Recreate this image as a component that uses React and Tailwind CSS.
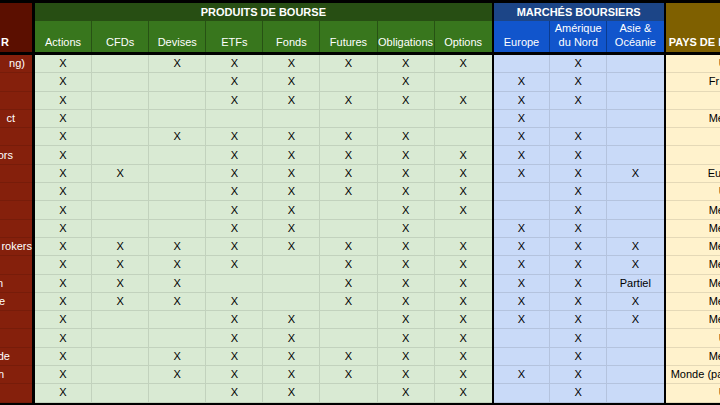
import React from "react";

// green: Actions..Options, blue: Europe / Amérique du Nord / Asie & Océanie
const rows = [
  ["10111111", "010"],
  ["10011010", "110"],
  ["10011111", "110"],
  ["10000000", "100"],
  ["10111110", "110"],
  ["10011111", "110"],
  ["11011111", "111"],
  ["10011111", "010"],
  ["10011011", "010"],
  ["10011010", "110"],
  ["11111111", "111"],
  ["11110111", "111"],
  ["11100111", "11P"],
  ["11110111", "111"],
  ["10011011", "111"],
  ["10011011", "010"],
  ["10111111", "010"],
  ["10111111", "110"],
  ["10011011", "010"],
];

const produits = ["Actions", "CFDs", "Devises", "ETFs", "Fonds", "Futures", "Obligations", "Options"];

// left column is scrolled, only the end of each name shows
const leftText = {
  0: { t: "ng)", c: "pr-[7px]" },
  3: { t: "ct", c: "pr-[17px]" },
  5: { t: "ors", c: "pr-[19px]" },
  10: { t: "rokers", c: "pr-0" },
  12: { t: "n", c: "pr-[29px] text-[#e69138]" },
  13: { t: "e", c: "pr-[27px]" },
  16: { t: "de", c: "pr-[22px]" },
  17: { t: "n", c: "pr-[28px]" },
};

const paysText = {
  0: { t: "U", c: "pl-[53px]" },
  1: { t: "Fr", c: "pl-[43px]" },
  3: { t: "Me", c: "pl-[43px]" },
  6: { t: "Eu", c: "pl-[42px]" },
  7: { t: "U", c: "pl-[53px]" },
  8: { t: "Me", c: "pl-[43px]" },
  9: { t: "Me", c: "pl-[43px]" },
  10: { t: "Me", c: "pl-[43px]" },
  11: { t: "Me", c: "pl-[43px]" },
  12: { t: "Me", c: "pl-[43px]" },
  13: { t: "Me", c: "pl-[43px]" },
  14: { t: "Me", c: "pl-[43px]" },
  15: { t: "U", c: "pl-[53px]" },
  16: { t: "Me", c: "pl-[43px]" },
  17: { t: "Monde (pa", c: "pl-[5px]" },
  18: { t: "U", c: "pl-[53px]" },
};

const Cell = ({ value, last }) => (
  <div
    className={
      "h-[18.3px] flex items-center justify-center border-b border-black/10 text-[11px] leading-none text-black " +
      (last ? "" : "border-r")
    }
  >
    {value === "1" ? "X" : value === "P" ? "Partiel" : ""}
  </div>
);

export default function App() {
  return (
    <div className="w-[720px] h-[405px] overflow-hidden bg-black pt-[3px] flex font-['Liberation_Sans',Arial,sans-serif]">
      {/* courtier */}
      <div className="w-[32px] shrink-0 flex flex-col gap-[3px]">
        <div className="h-[49px] bg-[#5b0f00] flex items-end justify-end pr-[23px] pb-[3px] overflow-hidden">
          <span className="text-white text-[11px] font-bold leading-[14px] whitespace-nowrap">R</span>
        </div>
        <div className="bg-[#85200c]">
          {rows.map((_, i) => (
            <div
              key={i}
              className={
                "h-[18.3px] flex items-center justify-end overflow-hidden whitespace-nowrap border-b border-black/10 text-white text-[11px] leading-none " +
                (leftText[i] ? leftText[i].c : "")
              }
            >
              {leftText[i] ? leftText[i].t : ""}
            </div>
          ))}
        </div>
      </div>

      {/* produits de bourse */}
      <div className="w-[456.7px] shrink-0 ml-[3px] flex flex-col gap-[3px]">
        <div className="h-[49px] flex flex-col">
          <div className="h-[18px] bg-[#274e13] flex items-center justify-center text-white text-[11px] font-bold">
            PRODUITS DE BOURSE
          </div>
          <div className="h-[31px] bg-[#38761d] grid grid-cols-8">
            {produits.map((p, i) => (
              <div
                key={p}
                className={
                  "flex items-end justify-center pb-[3px] text-white text-[11px] leading-[14px] whitespace-nowrap " +
                  (i < 7 ? "border-r border-black/30" : "")
                }
              >
                {p}
              </div>
            ))}
          </div>
        </div>
        <div className="bg-[#d9ead3] grid grid-cols-8">
          {rows.map((r, i) =>
            r[0].split("").map((v, j) => <Cell key={i + "-" + j} value={v} last={j === 7} />)
          )}
        </div>
      </div>

      {/* marchés boursiers */}
      <div className="w-[170px] shrink-0 ml-[2px] flex flex-col gap-[3px]">
        <div className="h-[49px] flex flex-col">
          <div className="h-[18px] bg-[#1c4587] flex items-center justify-center text-white text-[11px] font-bold">
            MARCHÉS BOURSIERS
          </div>
          <div className="h-[31px] bg-[#1155cc] grid grid-cols-3 text-white text-[11px] leading-[14px] text-center">
            <div className="flex items-end justify-center pb-[3px] border-r border-black/30">Europe</div>
            <div className="flex items-end justify-center pb-[3px] border-r border-black/30">
              Amérique
              <br />
              du Nord
            </div>
            <div className="flex items-end justify-center pb-[3px]">
              Asie &amp;
              <br />
              Océanie
            </div>
          </div>
        </div>
        <div className="bg-[#c9daf8] grid grid-cols-3">
          {rows.map((r, i) =>
            r[1].split("").map((v, j) => <Cell key={i + "-" + j} value={v} last={j === 2} />)
          )}
        </div>
      </div>

      {/* pays de régulation */}
      <div className="flex-1 min-w-0 ml-[2px] flex flex-col gap-[3px]">
        <div className="h-[49px] bg-[#7f6000] flex items-end pl-[3px] pb-[3px] overflow-hidden">
          <span className="text-white text-[11px] font-bold leading-[14px] whitespace-nowrap">PAYS DE RÉGULATION</span>
        </div>
        <div className="bg-[#fff2cc]">
          {rows.map((_, i) => (
            <div
              key={i}
              className={
                "h-[18.3px] flex items-center overflow-hidden whitespace-nowrap border-b border-black/10 text-black text-[11px] leading-none " +
                (paysText[i] ? paysText[i].c : "")
              }
            >
              {paysText[i] ? paysText[i].t : ""}
            </div>
          ))}
        </div>
      </div>
    </div>
  );
}
